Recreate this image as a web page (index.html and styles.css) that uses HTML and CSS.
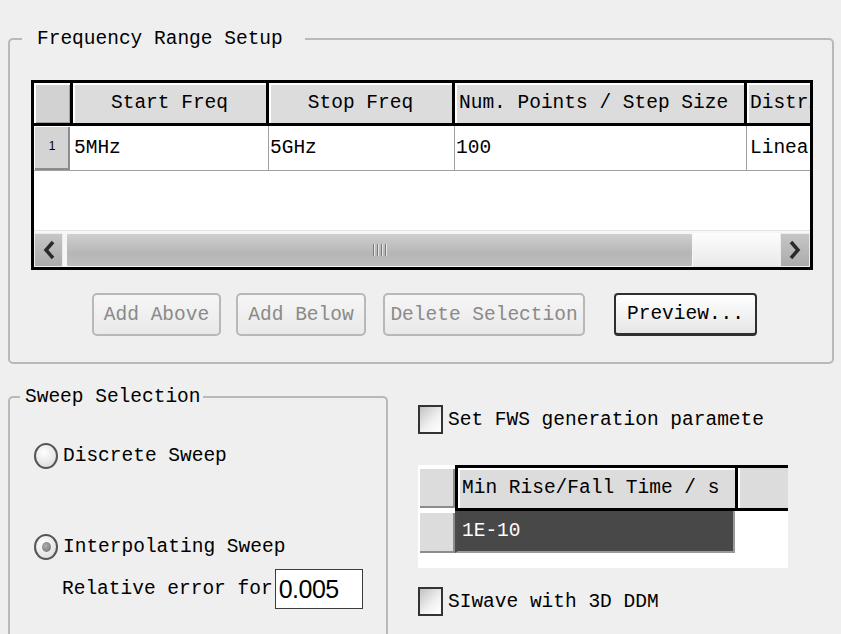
FILE: index.html
```html
<!DOCTYPE html>
<html lang="en">
<head>
    <meta charset="UTF-8">
    <title>Frequency Sweep</title>
    <link rel="stylesheet" href="styles.css">
</head>
<body>
    <fieldset class="group range-group">
        <legend class="range-title">Frequency Range Setup</legend>
        <div class="range-body">
            <div class="grid">
                <div class="grid-head">
                    <div class="corner"></div>
                    <div class="head-cell col-start">Start Freq</div>
                    <div class="head-cell col-stop">Stop Freq</div>
                    <div class="head-cell col-num">Num. Points / Step Size</div>
                    <div class="head-cell col-distr">Distribution</div>
                </div>
                <div class="grid-row">
                    <div class="row-num">1</div>
                    <div class="cell col-start">5MHz</div>
                    <div class="cell col-stop">5GHz</div>
                    <div class="cell col-num">100</div>
                    <div class="cell col-distr">Linear Step</div>
                </div>
                <div class="grid-empty"></div>
                <div class="hscroll">
                    <div class="scroll-btn">
                        <svg width="12" height="20" viewBox="0 0 12 20"><path d="M10 2 L3 10 L10 18" fill="none" stroke="#2a2a2a" stroke-width="3.5"/></svg>
                    </div>
                    <div class="scroll-thumb">
                        <svg width="16" height="12" viewBox="0 0 16 12">
                            <path d="M1.5 0V12M5.5 0V12M9.5 0V12M13.5 0V12" stroke="#7a7a7a" stroke-width="1"/>
                            <path d="M2.5 0V12M6.5 0V12M10.5 0V12M14.5 0V12" stroke="#e6e6e6" stroke-width="1"/>
                        </svg>
                    </div>
                    <div class="scroll-track"></div>
                    <div class="scroll-btn scroll-btn-right">
                        <svg width="12" height="20" viewBox="0 0 12 20"><path d="M2 2 L9 10 L2 18" fill="none" stroke="#2a2a2a" stroke-width="3.5"/></svg>
                    </div>
                </div>
            </div>
            <div class="actions">
                <button class="btn btn-above" disabled>Add Above</button>
                <button class="btn btn-below" disabled>Add Below</button>
                <button class="btn btn-delete" disabled>Delete Selection</button>
                <button class="btn btn-preview">Preview...</button>
            </div>
        </div>
    </fieldset>

    <div class="lower">
        <fieldset class="group sweep-group">
            <legend class="sweep-title">Sweep Selection</legend>
            <div class="sweep-body">
                <label class="radio-row"><span class="radio"></span>Discrete Sweep</label>
                <label class="radio-row radio-second"><span class="radio checked"></span>Interpolating Sweep</label>
                <div class="error-row">Relative error for<span class="error-input">0.005</span></div>
            </div>
        </fieldset>

        <div class="fws">
            <label class="check-row"><span class="check"></span><span class="clip">Set FWS generation parameters</span></label>
            <div class="rise-grid">
                <div class="rise-head">
                    <div class="rise-corner"></div>
                    <div class="rise-frame">
                        <div class="rise-title">Min Rise/Fall Time / s</div>
                        <div class="rise-blank"></div>
                    </div>
                </div>
                <div class="rise-row">
                    <div class="rise-num"></div>
                    <div class="rise-value">1E-10</div>
                </div>
            </div>
            <label class="check-row check-last"><span class="check"></span>SIwave with 3D DDM</label>
        </div>
    </div>
</body>
</html>
```

FILE: styles.css
```css
* { box-sizing: border-box; }
html { overflow: hidden; }
body { margin: 0; padding: 27px 0 0 8px; height: 634px; overflow: hidden; background: #efefef; font-family: "Liberation Mono", "DejaVu Sans Mono", monospace; font-size: 19.5px; color: #000; }

.group { margin: 0; padding: 0; border: 2px solid #b9b9b9; border-radius: 5px; min-width: 0; }
.range-group { width: 826px; }
.range-title { margin-left: 12px; padding: 0 22px 0 15px; line-height: 24px; }
.range-body { padding: 29px 0 26px 21px; }

/* frequency table */
.grid { width: 782px; height: 190px; border: 3px solid #000; background: #fff; display: flex; flex-direction: column; overflow: hidden; }
.grid-head { display: flex; height: 43px; flex-shrink: 0; border-bottom: 3px solid #000; }
.corner { width: 39px; flex-shrink: 0; border-right: 3px solid #000; background: #d2d2d2; box-shadow: inset 2px 2px #fff, inset -1px -1px #a0a0a0; }
.head-cell { flex-shrink: 0; border-right: 3px solid #000; background: #dcdcdc; box-shadow: inset 2px 2px #fff; text-align: center; line-height: 40px; white-space: nowrap; overflow: hidden; }
.col-start { width: 196px; }
.col-stop { width: 186px; }
.col-num { width: 292px; }
.col-distr { width: 80px; }
.head-cell.col-num { text-align: left; padding-left: 4px; }
.head-cell.col-distr { text-align: left; padding-left: 3px; }

.grid-row { display: flex; height: 45px; flex-shrink: 0; border-bottom: 1px solid #a0a0a0; }
.row-num { width: 36px; margin-right: 3px; flex-shrink: 0; background: #d4d4d4; box-shadow: inset 1px 1px #fff, inset -2px -2px #8c8c8c; font-family: "Liberation Sans", sans-serif; font-size: 12px; line-height: 40px; text-align: center; }
.cell { flex-shrink: 0; border-right: 1px solid #a0a0a0; padding-left: 1px; line-height: 44px; white-space: nowrap; overflow: hidden; }
.cell.col-distr { padding-left: 3px; }
.grid-empty { flex: 1; }

.hscroll { height: 37px; flex-shrink: 0; display: flex; padding-top: 2px; background: #f6f6f6; border-top: 1px solid #e4e4e4; }
.scroll-btn { width: 29px; flex-shrink: 0; display: flex; align-items: center; justify-content: center; background: linear-gradient(#c6c6c6, #ababab); border: 1px solid #ececec; }
.scroll-btn-right { width: 30px; }
.scroll-thumb { width: 627px; margin-left: 3px; flex-shrink: 0; display: flex; align-items: center; justify-content: center; background: linear-gradient(#cfcfcf, #b6b6b6 60%, #bebebe); border: 1px solid #f6f6f6; border-radius: 2px; }
.scroll-track { flex: 1; background: linear-gradient(#fdfdfd, #e8e8e8); }

/* buttons */
.actions { display: flex; margin: 23px 0 0 61px; }
.btn { height: 43px; padding: 0; font: inherit; border: 2px solid #b8b8b8; border-radius: 5px; background: linear-gradient(#f6f6f6, #e9e9e9); color: #8a8a8a; }
.btn-above { width: 129px; }
.btn-below { width: 130px; margin-left: 15px; }
.btn-delete { width: 202px; margin-left: 17px; }
.btn-preview { width: 143px; margin-left: 29px; border-color: #2f2f2f; border-bottom-width: 3px; border-radius: 4px; background: linear-gradient(#ffffff, #e6e6e6); color: #000; }

/* lower part */
.lower { display: flex; align-items: flex-start; margin-top: 21px; }
.sweep-group { width: 380px; height: 249px; flex-shrink: 0; border-bottom: none; border-radius: 5px 5px 0 0; }
.sweep-title { margin-left: 10px; padding: 0 2px 0 5px; line-height: 24px; }
.sweep-body { padding: 32px 0 0 24px; }
.radio-row { display: flex; align-items: center; gap: 5px; height: 30px; }
.radio-second { margin-top: 61px; }
.radio { width: 24px; height: 26px; flex-shrink: 0; border: 2px solid #555; border-radius: 50%; background: radial-gradient(circle at 40% 35%, #fff, #d6d6d6); display: flex; align-items: center; justify-content: center; }
.radio.checked::after { content: ""; width: 9px; height: 10px; border-radius: 50%; background: radial-gradient(circle at 40% 40%, #b0b0b0, #6a6a6a); }
.error-row { display: flex; align-items: center; height: 40px; margin-top: 7px; padding-left: 28px; }
.error-input { width: 88px; height: 40px; margin-left: 2px; border: 1px solid #3c3c3c; background: #fff; font-family: "Liberation Sans", sans-serif; font-size: 25px; letter-spacing: -0.5px; line-height: 38px; padding-left: 3px; }

.fws { margin-left: 30px; padding-top: 20px; }
.check-row { display: flex; align-items: center; gap: 5px; height: 29px; }
.check { width: 25px; height: 29px; flex-shrink: 0; border: 2px solid #333; background: linear-gradient(135deg, #c2c2c2, #f2f2f2 60%, #fff); }
.clip { width: 317px; overflow: hidden; white-space: nowrap; }
.check-last { margin-top: 19px; }

.rise-grid { width: 370px; margin-top: 31px; background: #fff; padding-bottom: 13px; }
.rise-head { display: flex; height: 46px; }
.rise-corner { width: 37px; height: 41px; margin-top: 2px; flex-shrink: 0; background: #dcdcdc; box-shadow: inset 2px 2px #fff, inset -2px -2px #8c8c8c; }
.rise-frame { flex: 1; display: flex; border: 3px solid #000; border-right: none; }
.rise-title { width: 280px; flex-shrink: 0; border-right: 3px solid #000; background: #dcdcdc; box-shadow: inset 2px 2px #fff; padding-left: 4px; line-height: 40px; white-space: nowrap; }
.rise-blank { flex: 1; border-left: 2px solid #fff; background: #dcdcdc; }
.rise-row { display: flex; height: 44px; }
.rise-num { width: 37px; height: 42px; flex-shrink: 0; background: #dcdcdc; box-shadow: inset 2px 2px #fff, inset -2px -2px #8c8c8c; }
.rise-value { width: 280px; height: 42px; border-left: 3px solid #4a4a4a; background: #484848; border-right: 2px solid #9a9a9a; border-bottom: 2px solid #9a9a9a; color: #fff; padding-left: 4px; line-height: 40px; }
```
